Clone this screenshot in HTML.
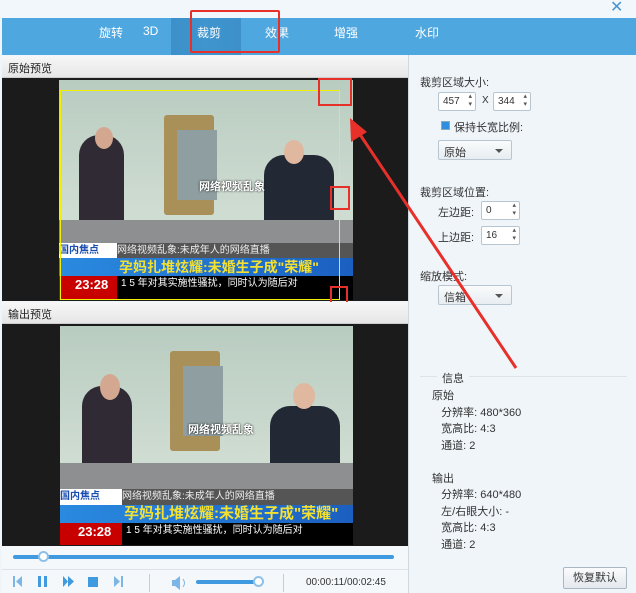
<!DOCTYPE html><html><head><meta charset="utf-8"><style>
*{margin:0;padding:0;box-sizing:border-box}
body{width:636px;height:593px;position:relative;overflow:hidden;background:#f0f5f9;font-family:"Liberation Sans","Noto Sans CJK SC",sans-serif;font-size:11px;color:#333}
.a{position:absolute}
.tab{position:absolute;top:24px;color:#fff;font-size:12px}
.hdr{position:absolute;left:2px;width:406px;height:22px;background:linear-gradient(#f7f7f7,#e6e6e6);font-size:11px;padding:4px 6px;color:#222;border-bottom:1px solid #ccc}
.vbg{position:absolute;left:2px;width:406px;background:#1b1b1b}
.img{position:absolute;overflow:hidden;background:linear-gradient(#b9ccc0,#cfdcd2 60%)}
.img div{position:absolute}
.lbl{font-size:11px;color:#333}
.spin{position:absolute;height:19px;background:#fff;border:1px solid #b8c6d2;border-radius:2px;font-size:10px;padding:3px 4px}
.spin:after{content:"▴\A▾";white-space:pre;position:absolute;right:3px;top:0;font-size:7px;line-height:8px;color:#555}
.dd{position:absolute;height:20px;width:74px;background:linear-gradient(#fafbfc,#e8edf1);border:1px solid #b8c6d2;border-radius:2px;font-size:11px;padding:3px 5px}
.dd:after{content:"";position:absolute;right:8px;top:8px;border:4px solid transparent;border-top:4px solid #555}
</style></head><body>
<div class="a" style="left:0;top:0;width:636px;height:18px;background:#f2f7fb"></div>
<div class="a" style="left:610px;top:-3px;font-size:16px;color:#4a95cf">✕</div>
<div class="a" style="left:2px;top:18px;width:634px;height:37px;background:#4fa7e0"></div>
<div class="a" style="left:171px;top:18px;width:70px;height:37px;background:linear-gradient(90deg,#3d90c9,#3f95cf,#3d90c9)"></div>
<div class="tab" style="left:99px">旋转</div>
<div class="tab" style="left:143px">3D</div>
<div class="tab" style="left:197px">裁剪</div>
<div class="tab" style="left:265px">效果</div>
<div class="tab" style="left:334px">增强</div>
<div class="tab" style="left:415px">水印</div>
<div class="a" style="left:190px;top:10px;width:90px;height:43px;border:2px solid #e8302a;border-radius:2px"></div>

<div class="a" style="left:408px;top:55px;width:1px;height:538px;background:#d0d8df"></div>
<div class="hdr" style="top:56px">原始预览</div>
<div class="vbg" style="top:78px;height:223px"></div>
<div class="img" style="left:59px;top:80px;width:294px;height:220px">
 <div style="left:105px;top:35px;width:50px;height:100px;background:#a89058;border-radius:3px"></div>
 <div style="left:118px;top:50px;width:40px;height:70px;background:#8f9ea0"></div>
 <div style="left:20px;top:55px;width:45px;height:95px;background:#2f2a34;border-radius:20px 20px 4px 4px"></div>
 <div style="left:36px;top:47px;width:18px;height:22px;background:#d4a890;border-radius:50%"></div>
 <div style="left:205px;top:75px;width:70px;height:80px;background:#222834;border-radius:20px 20px 4px 4px"></div>
 <div style="left:225px;top:60px;width:20px;height:24px;background:#e0b8a0;border-radius:50%"></div>
 <div style="left:0;top:140px;width:294px;height:25px;background:#8d8f90"></div>
 <div style="left:0;top:163px;width:58px;height:15px;background:#fff;color:#1a4db0;font-size:10px;font-weight:bold;line-height:15px">国内焦点</div>
 <div style="left:58px;top:163px;width:236px;height:15px;background:#555;color:#eee;font-size:10px;line-height:15px">网络视频乱象:未成年人的网络直播</div>
 <div style="left:0;top:178px;width:294px;height:18px;background:linear-gradient(90deg,#2a8ae0,#1b5fc0);color:#f4e030;font-size:14px;font-weight:bold;line-height:18px;padding-left:60px">孕妈扎堆炫耀:未婚生子成"荣耀"</div>
 <div style="left:0;top:196px;width:294px;height:24px;background:#000;color:#fff;font-size:10px;line-height:16px;padding-left:62px">1 5 年对其实施性骚扰，同时认为随后对</div>
 <div style="left:0;top:196px;width:58px;height:24px;background:#c80000;color:#fff;font-weight:bold;font-size:13px;padding:1px 0 0 16px">23:28</div>
 <div style="left:140px;top:98px;color:#fff;font-size:11px;font-weight:bold;text-shadow:0 0 2px #000">网络视频乱象</div>
</div>
<div class="a" style="left:60px;top:90px;width:280px;height:210px;border:1px solid #f0f000"></div>
<div class="a" style="left:318px;top:78px;width:34px;height:28px;border:2px solid #e8302a"></div>
<div class="a" style="left:330px;top:186px;width:20px;height:24px;border:2px solid #e8302a"></div>
<div class="a" style="left:330px;top:286px;width:18px;height:27px;border:2px solid #e8302a"></div>

<div class="hdr" style="top:302px">输出预览</div>
<div class="vbg" style="top:324px;height:222px"></div>
<div class="img" style="left:60px;top:326px;width:293px;height:219px">
 <div style="left:110px;top:25px;width:50px;height:100px;background:#a89058;border-radius:3px"></div>
 <div style="left:123px;top:40px;width:40px;height:70px;background:#8f9ea0"></div>
 <div style="left:22px;top:60px;width:50px;height:85px;background:#2f2a34;border-radius:20px 20px 4px 4px"></div>
 <div style="left:40px;top:48px;width:20px;height:26px;background:#d4a890;border-radius:50%"></div>
 <div style="left:210px;top:80px;width:70px;height:70px;background:#222834;border-radius:20px 20px 4px 4px"></div>
 <div style="left:233px;top:57px;width:22px;height:26px;background:#e0b8a0;border-radius:50%"></div>
 <div style="left:0;top:137px;width:293px;height:26px;background:#8d8f90"></div>
 <div style="left:0;top:163px;width:62px;height:16px;background:#fff;color:#1a4db0;font-size:10px;font-weight:bold;line-height:16px">国内焦点</div>
 <div style="left:62px;top:163px;width:231px;height:16px;background:#555;color:#eee;font-size:10px;line-height:16px">网络视频乱象:未成年人的网络直播</div>
 <div style="left:0;top:179px;width:293px;height:18px;background:linear-gradient(90deg,#2a8ae0,#1b5fc0);color:#f4e030;font-size:15px;font-weight:bold;line-height:18px;padding-left:64px">孕妈扎堆炫耀:未婚生子成"荣耀"</div>
 <div style="left:0;top:197px;width:293px;height:22px;background:#000;color:#fff;font-size:10px;line-height:16px;padding-left:66px">1 5 年对其实施性骚扰，同时认为随后对</div>
 <div style="left:0;top:197px;width:62px;height:22px;background:#c80000;color:#fff;font-weight:bold;font-size:13px;padding:1px 0 0 18px">23:28</div>
 <div style="left:128px;top:95px;color:#fff;font-size:11px;font-weight:bold;text-shadow:0 0 2px #000">网络视频乱象</div>
</div>

<div class="a" style="left:2px;top:546px;width:406px;height:47px;background:#f5f8fb"></div>
<div class="a" style="left:2px;top:569px;width:406px;height:1px;background:#dde3e8"></div>
<div class="a" style="left:13px;top:555px;width:381px;height:4px;background:#3f9ae0;border-radius:2px"></div>
<div class="a" style="left:38px;top:551px;width:11px;height:11px;border-radius:50%;background:#fff;border:2px solid #8fc0e8"></div>
<svg class="a" style="left:0;top:570px" width="140" height="23">
<rect x="13" y="6" width="2" height="11" fill="#7bb6e6"/><polygon points="22,6 22,17 16,11.5" fill="#7bb6e6"/>
<rect x="38" y="6" width="3" height="11" fill="#3f9ae0"/><rect x="44" y="6" width="3" height="11" fill="#3f9ae0"/>
<polygon points="63,6 63,17 68,11.5" fill="#3f9ae0"/><polygon points="68,6 68,17 74,11.5" fill="#3f9ae0"/>
<rect x="88" y="7" width="10" height="10" fill="#3f9ae0"/>
<polygon points="114,6 114,17 120,11.5" fill="#7bb6e6"/><rect x="121" y="6" width="2" height="11" fill="#7bb6e6"/>
</svg>
<div class="a" style="left:149px;top:574px;width:1px;height:18px;background:#ccc"></div>
<svg class="a" style="left:170px;top:574px" width="20" height="18"><rect x="2" y="6" width="3" height="6" fill="#7bb6e6"/><polygon points="5,6 10,2 10,16 5,12" fill="#7bb6e6"/><path d="M13 5 Q16 9 13 13" stroke="#7bb6e6" fill="none"/></svg>
<div class="a" style="left:196px;top:580px;width:64px;height:4px;background:#3f9ae0;border-radius:2px"></div>
<div class="a" style="left:253px;top:576px;width:11px;height:11px;border-radius:50%;background:#fff;border:2px solid #8fc0e8"></div>
<div class="a" style="left:283px;top:574px;width:1px;height:18px;background:#ccc"></div>
<div class="a" style="left:306px;top:577px;font-size:10px;color:#333">00:00:11/00:02:45</div>

<div class="a lbl" style="left:420px;top:74px">裁剪区域大小:</div>
<div class="spin" style="left:438px;top:92px;width:38px">457</div>
<div class="a lbl" style="left:482px;top:95px;font-size:10px">X</div>
<div class="spin" style="left:493px;top:92px;width:38px">344</div>
<div class="a" style="left:441px;top:121px;width:9px;height:9px;background:#2f8ee0;border:1px solid #8ab"></div>
<div class="a lbl" style="left:454px;top:119px">保持长宽比例:</div>
<div class="dd" style="left:438px;top:140px">原始</div>
<div class="a lbl" style="left:420px;top:184px">裁剪区域位置:</div>
<div class="a lbl" style="left:438px;top:204px">左边距:</div>
<div class="spin" style="left:481px;top:201px;width:39px">0</div>
<div class="a lbl" style="left:438px;top:229px">上边距:</div>
<div class="spin" style="left:481px;top:226px;width:39px">16</div>
<div class="a lbl" style="left:420px;top:268px">缩放模式:</div>
<div class="dd" style="left:438px;top:285px">信箱</div>

<svg class="a" style="left:0;top:0" width="636" height="593"><line x1="516" y1="368" x2="357" y2="130" stroke="#e8302a" stroke-width="3"/><polygon points="350,118 351,142 367,132" fill="#e8302a"/></svg>

<div class="a" style="left:420px;top:376px;width:207px;height:1px;background:#dde3e8"></div>
<div class="a lbl" style="left:437px;top:370px;background:#f0f5f9;padding:0 5px">信息</div>
<div class="a lbl" style="left:432px;top:388px;line-height:16.5px">原始<br>&nbsp;&nbsp;&nbsp;分辨率: 480*360<br>&nbsp;&nbsp;&nbsp;宽高比: 4:3<br>&nbsp;&nbsp;&nbsp;通道: 2<br><br>输出<br>&nbsp;&nbsp;&nbsp;分辨率: 640*480<br>&nbsp;&nbsp;&nbsp;左/右眼大小: -<br>&nbsp;&nbsp;&nbsp;宽高比: 4:3<br>&nbsp;&nbsp;&nbsp;通道: 2</div>
<div class="a" style="left:563px;top:567px;width:64px;height:22px;background:linear-gradient(#fafbfc,#e4e9ee);border:1px solid #aab8c4;border-radius:2px;font-size:11px;text-align:center;line-height:20px">恢复默认</div>
</body></html>
